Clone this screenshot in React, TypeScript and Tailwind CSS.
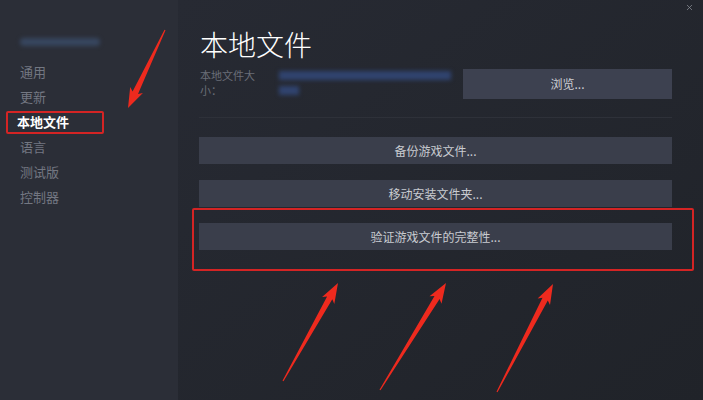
import { X } from 'lucide-react';

const navItems = ['通用', '更新', '本地文件', '语言', '测试版', '控制器'];
const actionButtons = ['备份游戏文件...', '移动安装文件夹...', '验证游戏文件的完整性...'];

// red annotation arrows: [tailX, tailY, headX, headY]
const arrows: [number, number, number, number][] = [
  [165, 30, 128, 108],
  [283, 381, 338, 283],
  [380, 390, 446, 283],
  [497, 392, 553, 284],
];

function arrowPoints([tx, ty, hx, hy]: [number, number, number, number]) {
  const len = Math.hypot(hx - tx, hy - ty);
  const dx = (hx - tx) / len;
  const dy = (hy - ty) / len;
  const nx = -dy;
  const ny = dx;
  const headLen = 17;
  const ex = hx - dx * headLen;
  const ey = hy - dy * headLen;
  const p = (x: number, y: number) => `${x.toFixed(1)},${y.toFixed(1)}`;
  return [
    p(tx + nx * 0.6, ty + ny * 0.6),
    p(ex + nx * 3, ey + ny * 3),
    p(ex - dx * 3 + nx * 7, ey - dy * 3 + ny * 7),
    p(hx, hy),
    p(ex - dx * 3 - nx * 7, ey - dy * 3 - ny * 7),
    p(ex - nx * 3, ey - ny * 3),
    p(tx - nx * 0.6, ty - ny * 0.6),
  ].join(' ');
}

export default function App() {
  return (
    <div className="relative flex h-[400px] w-[703px] overflow-hidden font-['Noto_Sans_CJK_SC','Noto_Sans',sans-serif]">
      {/* Sidebar */}
      <aside className="w-[178px] shrink-0 bg-[#2b2e37] pt-[38px] pl-[20px]">
        <div className="h-[8px] w-[80px] rounded-sm bg-[#37465f] blur-[2px]" />
        <nav className="mt-[13px] flex flex-col">
          {navItems.map((item) => (
            <div
              key={item}
              className={
                item === '本地文件'
                  ? 'h-[25px] text-[13px] leading-[25px] font-bold text-white -ml-[3px]'
                  : 'h-[25px] text-[13px] leading-[25px] text-[#737782]'
              }
            >
              {item}
            </div>
          ))}
        </nav>
      </aside>

      {/* Main panel */}
      <main className="flex-1 bg-gradient-to-br from-[#272a33] to-[#202329] pl-[21px] pr-[31px] pt-[24px]">
        <h1 className="pl-[1px] text-[28px] font-light leading-[40px] text-white">本地文件</h1>

        <div className="mt-[5px] flex items-start">
          <div className="-mt-[1px] flex w-[80px] flex-col pl-[1px] text-[11px] leading-[15px] text-[#6a6e78]">
            <span>本地文件大</span>
            <span>小：</span>
          </div>
          <div className="flex w-[184px] flex-col gap-[6px] pt-[2px] blur-[2px]">
            <div className="h-[9px] w-[172px] bg-[#30436f]" />
            <div className="h-[9px] w-[20px] bg-[#30436f]" />
          </div>
          <button className="h-[30px] flex-1 bg-[#3d4150] text-[12px] text-[#cdd0d5]">浏览...</button>
        </div>

        <div className="mt-[18px] h-px bg-[#2e3139]" />

        <div className="mt-[19px] flex flex-col gap-[16px]">
          {actionButtons.map((label) => (
            <button key={label} className="h-[27px] w-full bg-[#3a3e4b] text-[12px] text-[#c9ccd1]">
              {label}
            </button>
          ))}
        </div>
      </main>

      {/* Close */}
      <X className="absolute right-[9px] top-[3px] h-[9px] w-[9px] text-[#8a8d95]" strokeWidth={2} />

      {/* Annotations */}
      <div className="pointer-events-none absolute left-[6px] top-[111px] h-[23px] w-[98px] rounded-[2px] border-2 border-[#d42424]" />
      <div className="pointer-events-none absolute left-[192px] top-[208px] h-[63px] w-[502px] rounded-[2px] border-2 border-[#d42424]" />
      <svg className="pointer-events-none absolute inset-0" width={703} height={400}>
        {arrows.map((a, i) => (
          <polygon key={i} points={arrowPoints(a)} fill="#ee2a1e" />
        ))}
      </svg>
    </div>
  );
}
